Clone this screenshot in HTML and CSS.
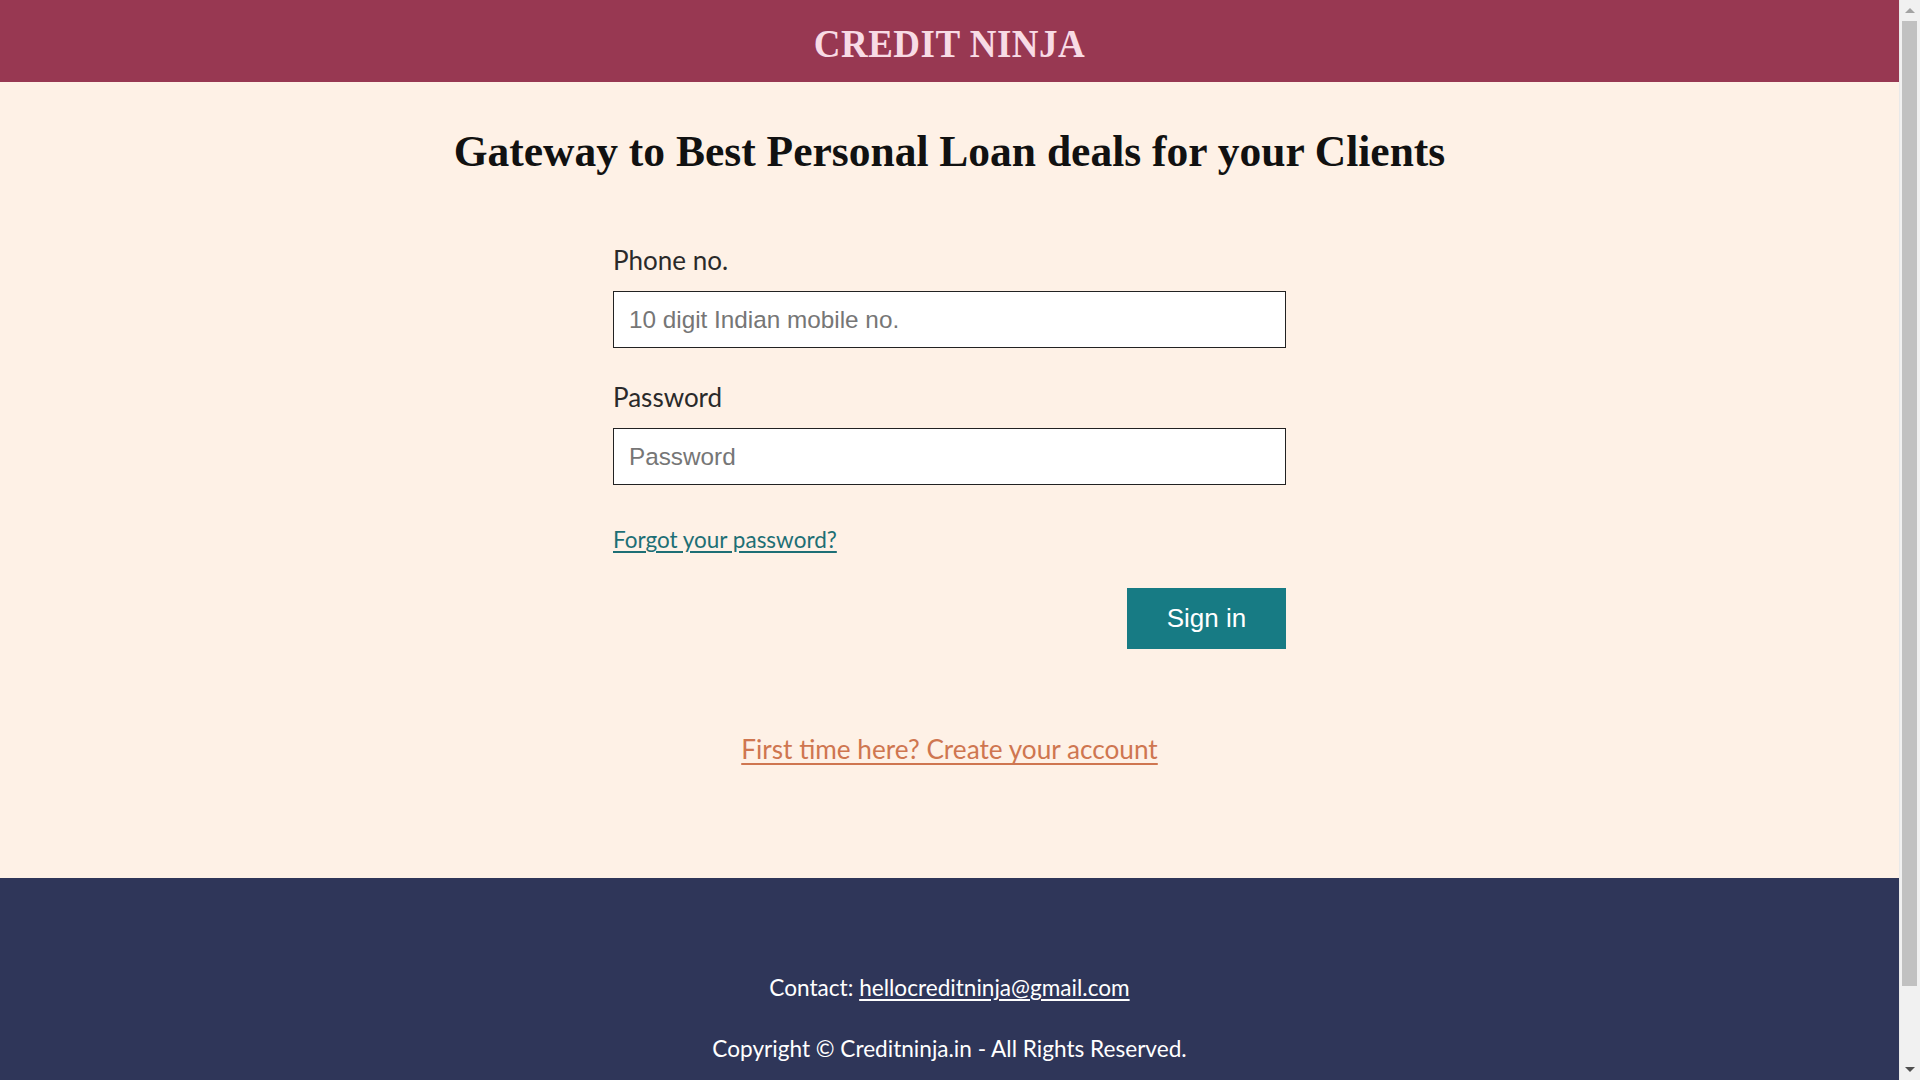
FILE: index.html
```html
<!DOCTYPE html>
<html lang="en">
<head>
<meta charset="utf-8">
<title>Credit Ninja</title>
<link rel="stylesheet" href="styles.css">
</head>
<body>
<div class="page">
  <header class="topbar">
    <div class="brand">CREDIT NINJA</div>
  </header>
  <main class="main">
    <h1 class="headline">Gateway to Best Personal Loan deals for your Clients</h1>
    <form class="login">
      <label class="field-label" for="phone">Phone no.</label>
      <input class="field-input" id="phone" type="text" placeholder="10 digit Indian mobile no.">
      <label class="field-label second" for="pwd">Password</label>
      <input class="field-input" id="pwd" type="password" placeholder="Password">
      <a class="forgot" href="#">Forgot your password?</a>
      <div class="actions">
        <button class="signin" type="button">Sign in</button>
      </div>
    </form>
    <div class="create-wrap"><a class="create" href="#">First time here? Create your account</a></div>
  </main>
  <footer class="footer">
    <p class="footer-line">Contact: <a class="mail" href="#">hellocreditninja@gmail.com</a></p>
    <p class="footer-line copy">Copyright © Creditninja.in - All Rights Reserved.</p>
  </footer>
</div>
<div class="fake-scrollbar" aria-hidden="true">
  <div class="sb-arrow sb-up"></div>
  <div class="sb-thumb"></div>
  <div class="sb-arrow sb-down"></div>
</div>
</body>
</html>
```
FILE: styles.css
```css
html, body {
  margin: 0;
  padding: 0;
}
body {
  background: #fef1e6;
  font-family: "Lato", "Liberation Sans", sans-serif;
}
.page {
  margin-right: 21px;
}
.topbar {
  height: 82px;
  background: #983852;
  display: flex;
  align-items: center;
  justify-content: center;
}
.brand {
  font-family: "Liberation Serif", serif;
  font-weight: bold;
  font-size: 37px;
  color: #f8dbe5;
  letter-spacing: 0.5px;
  line-height: 1;
  padding-top: 4px;
  transform: scaleY(1.1);
}
.main {
  padding: 45px 0 112px;
  display: flex;
  flex-direction: column;
  align-items: center;
}
.headline {
  margin: 0;
  font-family: "Liberation Serif", serif;
  font-weight: bold;
  font-size: 43.5px;
  line-height: 48px;
  color: #111;
}
.login {
  width: 673px;
  margin-top: 71px;
  display: flex;
  flex-direction: column;
}
.field-label {
  font-size: 26px;
  line-height: 29px;
  color: #2a2a2a;
  margin-bottom: 16px;
}
.field-label.second {
  margin-top: 35px;
}
.field-input {
  box-sizing: border-box;
  height: 57px;
  width: 100%;
  border: 1.5px solid #222;
  background: #fff;
  padding: 0 15px;
  font-family: "Liberation Sans", Arial, sans-serif;
  font-size: 24.3px;
  color: #333;
  outline: none;
}
.field-input::placeholder {
  color: #767676;
}
.forgot {
  align-self: flex-start;
  margin-top: 40px;
  font-size: 22.5px;
  line-height: 29px;
  color: #1d6f75;
  text-decoration: underline;
  text-underline-offset: 3px;
}
.actions {
  display: flex;
  justify-content: flex-end;
  margin-top: 34px;
}
.signin {
  width: 159px;
  height: 61px;
  border: none;
  background: #177b84;
  color: #fff;
  font-family: "Liberation Sans", Arial, sans-serif;
  font-size: 26px;
  cursor: pointer;
}
.create-wrap {
  margin-top: 83px;
  text-align: center;
}
.create {
  font-size: 26.2px;
  line-height: 34px;
  color: #cf7650;
  text-decoration: underline;
  text-underline-offset: 4px;
}
.footer {
  background: #2f3659;
  padding: 95px 0 96px;
  text-align: center;
  color: #fff;
}
.footer-line {
  margin: 0;
  font-size: 22.6px;
  line-height: 29px;
}
.footer-line.copy {
  margin-top: 32px;
}
.mail {
  color: #fff;
  text-decoration: underline;
  text-underline-offset: 3px;
}
.fake-scrollbar {
  position: fixed;
  top: 0;
  right: 0;
  width: 21px;
  height: 100vh;
  background: #f1f1f1;
  border-left: 1px solid #e9e9e9;
  box-sizing: border-box;
}
.sb-thumb {
  position: absolute;
  left: 2px;
  right: 3px;
  top: 21px;
  height: 965px;
  background: #c1c1c1;
}
.sb-arrow {
  position: absolute;
  left: 5px;
  width: 0;
  height: 0;
  border-left: 5px solid transparent;
  border-right: 5px solid transparent;
}
.sb-up {
  top: 8px;
  border-bottom: 5px solid #a3a3a3;
}
.sb-down {
  bottom: 8px;
  border-top: 5px solid #505050;
}
```
